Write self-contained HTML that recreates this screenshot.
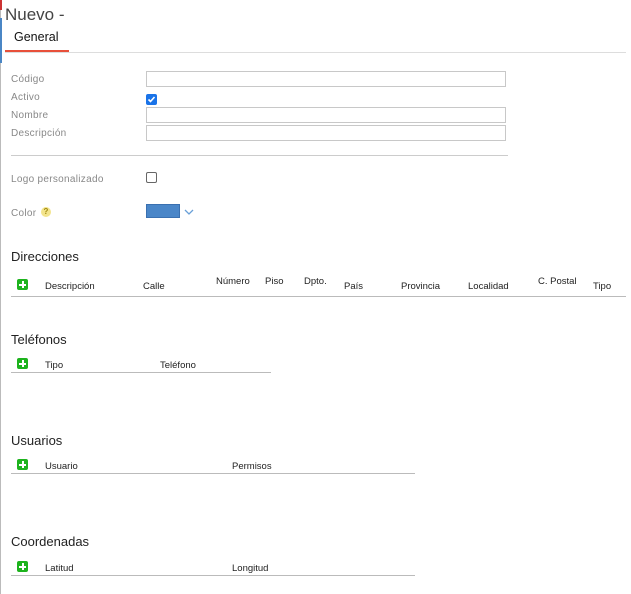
<!DOCTYPE html>
<html><head><meta charset="utf-8"><style>
*{margin:0;padding:0;box-sizing:border-box}
body{width:631px;height:594px;background:#fff;font-family:"Liberation Sans",Arial,sans-serif;position:relative;overflow:hidden;color:#222}
.a{position:absolute;white-space:nowrap}
.lbl{font-size:10px;color:#888;letter-spacing:0.3px}
.inp{position:absolute;left:146px;width:360px;height:16px;border:1px solid #c8c8c8;background:#fff}
.h{font-size:13px;color:#222}
.th{font-size:9.5px;color:#222}
.line{position:absolute;height:1px;background:#bbb}
.plus{position:absolute;width:11px;height:11px;border-radius:2px;background:#1db31d}
.plus:before{content:"";position:absolute;left:2px;top:4.5px;width:7px;height:2px;background:#fff}
.plus:after{content:"";position:absolute;left:4.5px;top:2px;width:2px;height:7px;background:#fff}
</style></head><body>
<div class="a" style="left:0;top:0;width:1px;height:594px;background:#bbb"></div>
<div class="a" style="left:0;top:0;width:2px;height:10px;background:#c33"></div>
<div class="a" style="left:0;top:18px;width:2px;height:45px;background:#4a86c5"></div>
<div class="a" style="left:5px;top:5px;font-size:17px;color:#444">Nuevo -</div>
<div class="a" style="left:14px;top:30px;font-size:12.5px;color:#111">General</div>
<div class="a" style="left:5px;top:50px;width:64px;height:2px;background:#e8503a"></div>
<div class="line" style="left:5px;top:52px;width:621px;background:#ddd"></div>

<div class="a lbl" style="left:11px;top:74px">Código</div>
<div class="inp" style="top:71px"></div>
<div class="a lbl" style="left:11px;top:92px">Activo</div>
<div class="a" style="left:146px;top:94px;width:11px;height:11px;border-radius:2px;background:#1a73e8"><svg style="display:block" width="11" height="11" viewBox="0 0 11 11"><path d="M2.5 5.5L4.5 7.5L8.5 3" stroke="#fff" stroke-width="1.6" fill="none"/></svg></div>
<div class="a lbl" style="left:11px;top:110px">Nombre</div>
<div class="inp" style="top:107px"></div>
<div class="a lbl" style="left:11px;top:128px">Descripción</div>
<div class="inp" style="top:125px"></div>
<div class="line" style="left:11px;top:155px;width:497px;background:#ccc"></div>

<div class="a lbl" style="left:11px;top:174px">Logo personalizado</div>
<div class="a" style="left:146px;top:172px;width:11px;height:11px;border:1px solid #666;border-radius:2px"></div>
<div class="a lbl" style="left:11px;top:208px">Color</div>
<div class="a" style="left:41px;top:207px;width:10px;height:10px;border-radius:50%;background:#f3e48c;font-size:8px;color:#a08a10;text-align:center;line-height:10px;font-weight:bold">?</div>
<div class="a" style="left:146px;top:204px;width:34px;height:14px;background:#4a86c8;border:1px solid #3a70b0"></div>
<svg class="a" style="left:184px;top:209px" width="10" height="6" viewBox="0 0 10 6"><path d="M1 1L5 5L9 1" stroke="#6aa0d8" stroke-width="1.3" fill="none"/></svg>

<div class="a h" style="left:11px;top:249px">Direcciones</div>
<div class="plus" style="left:17px;top:279px"></div>
<div class="a th" style="left:45px;top:281px">Descripción</div>
<div class="a th" style="left:143px;top:281px">Calle</div>
<div class="a th" style="left:216px;top:276px">Número</div>
<div class="a th" style="left:265px;top:276px">Piso</div>
<div class="a th" style="left:304px;top:276px">Dpto.</div>
<div class="a th" style="left:344px;top:281px">País</div>
<div class="a th" style="left:401px;top:281px">Provincia</div>
<div class="a th" style="left:468px;top:281px">Localidad</div>
<div class="a th" style="left:538px;top:276px">C. Postal</div>
<div class="a th" style="left:593px;top:281px">Tipo</div>
<div class="line" style="left:11px;top:296px;width:615px"></div>

<div class="a h" style="left:11px;top:332px">Teléfonos</div>
<div class="plus" style="left:17px;top:358px"></div>
<div class="a th" style="left:45px;top:360px">Tipo</div>
<div class="a th" style="left:160px;top:360px">Teléfono</div>
<div class="line" style="left:11px;top:372px;width:260px"></div>

<div class="a h" style="left:11px;top:433px">Usuarios</div>
<div class="plus" style="left:17px;top:459px"></div>
<div class="a th" style="left:45px;top:461px">Usuario</div>
<div class="a th" style="left:232px;top:461px">Permisos</div>
<div class="line" style="left:11px;top:473px;width:404px"></div>

<div class="a h" style="left:11px;top:534px">Coordenadas</div>
<div class="plus" style="left:17px;top:561px"></div>
<div class="a th" style="left:45px;top:563px">Latitud</div>
<div class="a th" style="left:232px;top:563px">Longitud</div>
<div class="line" style="left:11px;top:575px;width:404px"></div>
</body></html>
